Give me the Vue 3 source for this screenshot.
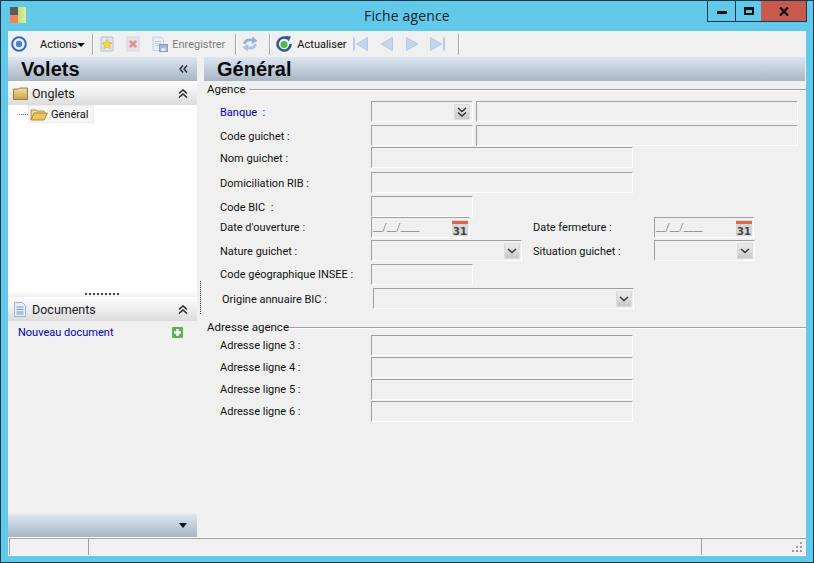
<script setup>
const addressRows = ['Adresse ligne 3 :', 'Adresse ligne 4 :', 'Adresse ligne 5 :', 'Adresse ligne 6 :']
</script>

<template>
  <div class="window">
    <header class="titlebar">
      <svg class="app-icon" width="16" height="16" viewBox="0 0 16 16">
        <defs>
          <linearGradient id="appGreen" x1="0" y1="0" x2="1" y2="0">
            <stop offset="0" stop-color="#b7e07e" />
            <stop offset="1" stop-color="#e2eda0" />
          </linearGradient>
          <linearGradient id="folderFill" x1="0" y1="0" x2="0" y2="1">
            <stop offset="0" stop-color="#f0dfa8" />
            <stop offset="1" stop-color="#cfa043" />
          </linearGradient>
        </defs>
        <rect x="0" y="0" width="8" height="8" fill="#5c5c5c" />
        <rect x="0" y="8" width="8" height="8" fill="#f0825a" />
        <rect x="8" y="0" width="8" height="16" fill="url(#appGreen)" />
      </svg>
      <span class="title">Fiche agence</span>
      <div class="caption">
        <button class="cap cap--min"><span class="min-bar"></span></button>
        <button class="cap cap--max"><span class="max-box"></span></button>
        <button class="cap cap--close">
          <svg width="10" height="9" viewBox="0 0 10 9">
            <path d="M1 0.5 L9 8.5 M9 0.5 L1 8.5" stroke="#111" stroke-width="2.4" fill="none" />
          </svg>
        </button>
      </div>
    </header>

    <div class="client">
      <div class="toolbar">
        <svg class="tb tb-home" width="16" height="16" viewBox="0 0 16 16">
          <circle cx="8" cy="8" r="6.8" fill="#eef3fb" stroke="#3a68bc" stroke-width="2" />
          <circle cx="8" cy="8" r="3.2" fill="#4a80d2" />
        </svg>
        <span class="tb-text tb-actions">Actions</span>
        <span class="caret"></span>
        <span class="sep sep-1"></span>

        <svg class="tb tb-new" width="14" height="16" viewBox="0 0 14 16">
          <path d="M1 1 H13 V15 H1 Z" fill="#dde5f2" stroke="#b4c0d8" />
          <path d="M7 3.5 L8.5 6.6 L12 7 L9.5 9.4 L10.2 12.8 L7 11.1 L3.8 12.8 L4.5 9.4 L2 7 L5.5 6.6 Z" fill="#f6d93f" stroke="#c9a21e" stroke-width="0.5" />
        </svg>
        <svg class="tb tb-del" width="14" height="16" viewBox="0 0 14 16">
          <path d="M1 1 H13 V15 H1 Z" fill="#e6e2e8" stroke="#d5d5e0" />
          <path d="M3.8 4.8 L10.2 11.2 M10.2 4.8 L3.8 11.2" stroke="#e08f8f" stroke-width="2.6" />
        </svg>
        <svg class="tb tb-save" width="16" height="16" viewBox="0 0 16 16">
          <path d="M1 1 H9 L11.5 3.5 V14.5 H1 Z" fill="#e9edf5" stroke="#c6d0e2" />
          <path d="M3 5.5 H9 M3 7.5 H9 M3 9.5 H7" stroke="#bfcbe0" />
          <rect x="7.5" y="8.5" width="8" height="7" fill="#a9b4d6" stroke="#8f9dc6" />
          <rect x="9.5" y="12" width="4" height="3" fill="#e6eaf4" />
        </svg>
        <span class="tb-text tb-text--off tb-save-label">Enregistrer</span>
        <span class="sep sep-2"></span>

        <svg class="tb tb-sync" width="16" height="16" viewBox="0 0 16 16">
          <path d="M1 7.5 C2 3.5 6.5 1.5 10 3 L10.5 0.5 L15.5 5 L9.5 8 L10 5.6 C7 4.6 4.5 5.6 3.5 8.5 Z" fill="#8fb0d8" />
          <path d="M1 7.5 C2 3.5 6.5 1.5 10 3 L10.5 0.5 L15.5 5 L9.5 8 L10 5.6 C7 4.6 4.5 5.6 3.5 8.5 Z" fill="#a8c4e6" transform="rotate(180 8 8)" />
        </svg>
        <span class="sep sep-3"></span>

        <svg class="tb tb-refresh" width="16" height="16" viewBox="0 0 16 16">
          <path d="M11.5 2.5 A6.5 6.5 0 1 0 14.6 8" fill="none" stroke="#31598f" stroke-width="2.6" />
          <path d="M9 0 L15 0.5 L12.5 5.5 Z" fill="#31598f" />
          <circle cx="8" cy="8.5" r="3.5" fill="#4fb848" />
        </svg>
        <span class="tb-text tb-refresh-label">Actualiser</span>

        <svg class="tb tb-first" width="15" height="14" viewBox="0 0 15 14">
          <path d="M1 0.5 V13.5" stroke="#b6cde8" stroke-width="2" />
          <path d="M14.5 0.5 V13.5 L3.5 7 Z" fill="#c2d6ee" stroke="#a9c3e2" stroke-width="0.8" />
        </svg>
        <svg class="tb tb-prev" width="13" height="14" viewBox="0 0 13 14">
          <path d="M12.5 0.5 V13.5 L1 7 Z" fill="#c2d6ee" stroke="#a9c3e2" stroke-width="0.8" />
        </svg>
        <svg class="tb tb-next" width="13" height="14" viewBox="0 0 13 14">
          <path d="M0.5 0.5 V13.5 L12 7 Z" fill="#c2d6ee" stroke="#a9c3e2" stroke-width="0.8" />
        </svg>
        <svg class="tb tb-last" width="15" height="14" viewBox="0 0 15 14">
          <path d="M0.5 0.5 V13.5 L11.5 7 Z" fill="#c2d6ee" stroke="#a9c3e2" stroke-width="0.8" />
          <path d="M14 0.5 V13.5" stroke="#b6cde8" stroke-width="2" />
        </svg>
        <span class="sep sep-4"></span>
      </div>

      <div class="workspace">
        <aside class="sidebar">
          <div class="band band--side">
            <h2 class="band-title band-title--side">Volets</h2>
            <svg class="chev" width="9" height="8" viewBox="0 0 9 8">
              <path d="M4 0.5 L1 4 L4 7.5 M8 0.5 L5 4 L8 7.5" fill="none" stroke="#222" stroke-width="1.3" />
            </svg>
          </div>

          <div class="pane-head">
            <svg width="15" height="13" viewBox="0 0 15 13">
              <path d="M0.5 2 H5.5 L6.5 1 H14.5 V12.5 H0.5 Z" fill="url(#folderFill)" stroke="#7f6a32" stroke-width="0.8" />
            </svg>
            <span class="pane-label">Onglets</span>
            <svg class="pane-chev" width="10" height="9" viewBox="0 0 10 9">
              <path d="M1 4.5 L5 1 L9 4.5 M1 8.5 L5 5 L9 8.5" fill="none" stroke="#222" stroke-width="1.4" />
            </svg>
          </div>

          <div class="tree">
            <div class="tree-row">
              <span class="tree-dots"></span>
              <div class="tree-item">
                <svg width="18" height="13" viewBox="0 0 18 13">
                  <path d="M1 12 V2 H6 L7 3 H14 V5" fill="#f2dc9c" stroke="#8f7a3a" stroke-width="0.8" />
                  <path d="M1 12 L4 5 H17.5 L14 12 Z" fill="#f4c357" stroke="#8f7a3a" stroke-width="0.8" />
                </svg>
                <span>Général</span>
              </div>
            </div>
          </div>

          <div class="grip"><span class="grip-dots"></span></div>

          <div class="pane-head">
            <svg width="15" height="15" viewBox="0 0 15 15">
              <path d="M1.5 0.5 H9.5 L12.5 3.5 V14.5 H1.5 Z" fill="#eaf0fb" stroke="#9db2dc" />
              <path d="M3.5 5 H10.5 M3.5 7.5 H10.5 M3.5 10 H10.5 M3.5 12 H10.5" stroke="#6f8fd0" />
            </svg>
            <span class="pane-label">Documents</span>
            <svg class="pane-chev" width="10" height="9" viewBox="0 0 10 9">
              <path d="M1 4.5 L5 1 L9 4.5 M1 8.5 L5 5 L9 8.5" fill="none" stroke="#222" stroke-width="1.4" />
            </svg>
          </div>

          <div class="docs">
            <a class="doc-link">Nouveau document</a>
            <svg class="doc-add" width="11" height="11" viewBox="0 0 11 11">
              <rect width="11" height="11" rx="1" fill="#5cb356" />
              <path d="M5.5 2 V9 M2 5.5 H9" stroke="#fff" stroke-width="2.4" />
            </svg>
          </div>

          <div class="band band--foot">
            <span class="foot-caret"></span>
          </div>
        </aside>

        <div class="splitter"><span class="splitter-dots"></span></div>

        <main class="content">
          <div class="band band--main">
            <h1 class="band-title band-title--main">Général</h1>
          </div>

          <section class="group group--agence">
            <div class="legend"><span>Agence</span><i></i></div>
            <div class="rows rows--agence">
              <div class="row">
                <label class="lbl lbl--link">Banque &nbsp;:</label>
                <div class="field w-102 combo combo--wide">
                  <span class="combo-btn">
                    <svg width="10" height="10" viewBox="0 0 10 10">
                      <path d="M1 1 L5 4.5 L9 1 M1 5.5 L5 9 L9 5.5" fill="none" stroke="#333" stroke-width="1.5" />
                    </svg>
                  </span>
                </div>
                <div class="field w-322 ml-3"></div>
              </div>
              <div class="row">
                <label class="lbl">Code guichet :</label>
                <div class="field w-102"></div>
                <div class="field w-322 ml-3"></div>
              </div>
              <div class="row">
                <label class="lbl">Nom guichet :</label>
                <div class="field w-262"></div>
              </div>
              <div class="row">
                <label class="lbl">Domiciliation RIB :</label>
                <div class="field w-262"></div>
              </div>
              <div class="row">
                <label class="lbl">Code BIC &nbsp;:</label>
                <div class="field w-102"></div>
              </div>
              <div class="row">
                <label class="lbl lbl--up">Date d'ouverture :</label>
                <div class="field w-99 date">
                  <span class="mask">__/__/____</span>
                  <svg class="cal" width="16" height="16" viewBox="0 0 16 16">
                    <rect width="16" height="16" fill="#d6d6d6" />
                    <rect y="1" width="16" height="3" fill="#d9694a" />
                    <text x="8" y="14.5" class="cal-num">31</text>
                  </svg>
                </div>
                <label class="lbl lbl--up lbl--right">Date fermeture :</label>
                <div class="field w-100 date">
                  <span class="mask">__/__/____</span>
                  <svg class="cal" width="16" height="16" viewBox="0 0 16 16">
                    <rect width="16" height="16" fill="#d6d6d6" />
                    <rect y="1" width="16" height="3" fill="#d9694a" />
                    <text x="8" y="14.5" class="cal-num">31</text>
                  </svg>
                </div>
              </div>
              <div class="row">
                <label class="lbl">Nature guichet :</label>
                <div class="field w-151 combo">
                  <span class="combo-btn">
                    <svg width="10" height="6" viewBox="0 0 10 6">
                      <path d="M1 1 L5 4.5 L9 1" fill="none" stroke="#333" stroke-width="1.5" />
                    </svg>
                  </span>
                </div>
                <label class="lbl lbl--right lbl--near">Situation guichet :</label>
                <div class="field w-101 combo">
                  <span class="combo-btn">
                    <svg width="10" height="6" viewBox="0 0 10 6">
                      <path d="M1 1 L5 4.5 L9 1" fill="none" stroke="#333" stroke-width="1.5" />
                    </svg>
                  </span>
                </div>
              </div>
              <div class="row">
                <label class="lbl lbl--up">Code géographique INSEE :</label>
                <div class="field w-102"></div>
              </div>
              <div class="row row--shift">
                <label class="lbl">Origine annuaire BIC :</label>
                <div class="field w-261 combo">
                  <span class="combo-btn">
                    <svg width="10" height="6" viewBox="0 0 10 6">
                      <path d="M1 1 L5 4.5 L9 1" fill="none" stroke="#333" stroke-width="1.5" />
                    </svg>
                  </span>
                </div>
              </div>
            </div>
          </section>

          <section class="group group--adresse">
            <div class="legend"><span>Adresse agence</span><i></i></div>
            <div class="rows rows--adresse">
              <div v-for="label in addressRows" :key="label" class="row">
                <label class="lbl lbl--up">{{ label }}</label>
                <div class="field w-262"></div>
              </div>
            </div>
          </section>
        </main>
      </div>

      <footer class="statusbar">
        <div class="cell cell--a"></div>
        <div class="cell cell--b"></div>
        <div class="cell cell--c">
          <svg class="size-grip" width="12" height="12" viewBox="0 0 12 12" fill="#9a9a9a">
            <rect x="9" y="0" width="2" height="2" />
            <rect x="9" y="4" width="2" height="2" />
            <rect x="5" y="4" width="2" height="2" />
            <rect x="9" y="8" width="2" height="2" />
            <rect x="5" y="8" width="2" height="2" />
            <rect x="1" y="8" width="2" height="2" />
          </svg>
        </div>
      </footer>
    </div>
  </div>
</template>

<style scoped>
.window {
  width: 814px;
  height: 563px;
  box-sizing: border-box;
  background: #62c9eb;
  border: 1px solid #17384a;
  display: flex;
  flex-direction: column;
  font-family: Roboto, "Liberation Sans", sans-serif;
  font-size: 11px;
  color: #111;
  overflow: hidden;
}

/* barre de titre */
.titlebar {
  height: 30px;
  flex: none;
  display: flex;
  align-items: flex-start;
  position: relative;
}

.app-icon {
  margin: 6px 0 0 9px;
}

.title {
  position: absolute;
  left: 363px;
  top: 5px;
  font-family: "Open Sans", sans-serif;
  font-size: 14px;
  letter-spacing: 0.15px;
  color: #12242e;
}

.caption {
  margin-left: auto;
  margin-right: 6px;
  margin-top: -1px;
  display: flex;
  height: 22px;
  border: 1px solid #17384a;
  box-sizing: border-box;
}

.cap {
  padding: 0;
  border: none;
  background: none;
  display: flex;
  align-items: center;
  justify-content: center;
}

.cap--min {
  width: 28px;
  border-right: 1px solid #17384a;
}

.cap--max {
  width: 25px;
}

.cap--close {
  width: 45px;
  background: #c75a4c;
}

.min-bar {
  width: 10px;
  height: 3px;
  margin-top: 3px;
  background: #111;
}

.max-box {
  width: 6px;
  height: 3px;
  border: 2px solid #111;
  border-top-width: 3px;
}

.client {
  flex: 1;
  margin: 0 7px 6px 7px;
  background: #f0f0f0;
  display: flex;
  flex-direction: column;
  min-height: 0;
}

/* barre d'outils */
.toolbar {
  height: 26px;
  flex: none;
  display: flex;
  align-items: center;
}

.tb {
  flex: none;
}

.tb-text {
  color: #111;
}

.tb-text--off {
  color: #7d7d7d;
}

.tb-home { margin-left: 3px; }
.tb-actions { margin-left: 13px; }
.caret {
  margin: 1px 0 0 0;
  border-left: 4px solid transparent;
  border-right: 4px solid transparent;
  border-top: 4px solid #111;
}
.sep {
  width: 1px;
  height: 21px;
  background: #a8a8a8;
  box-shadow: 1px 0 0 #fff;
}
.sep-1 { margin-left: 7px; }
.tb-new { margin-left: 7px; }
.tb-del { margin-left: 12px; }
.tb-save { margin-left: 12px; }
.tb-save-label { margin-left: 4px; }
.sep-2 { margin-left: 10px; }
.tb-sync { margin-left: 6px; }
.sep-3 { margin-left: 11px; }
.tb-refresh { margin-left: 6px; }
.tb-refresh-label { margin-left: 5px; }
.tb-first { margin-left: 6px; }
.tb-prev { margin-left: 12px; }
.tb-next { margin-left: 13px; }
.tb-last { margin-left: 11px; }
.sep-4 { margin-left: 13px; }

/* zone principale */
.workspace {
  flex: 1;
  display: flex;
  min-height: 0;
}

.sidebar {
  width: 189px;
  flex: none;
  display: flex;
  flex-direction: column;
}

.band {
  height: 24px;
  flex: none;
  display: flex;
  align-items: center;
  background: linear-gradient(#dce7f3, #a9b4c2);
}

.band-title {
  margin: 0;
  font-family: "Liberation Sans", Arial, sans-serif;
  font-weight: 700;
  font-size: 20px;
  line-height: 24px;
  color: #0a0a0a;
}

.band-title--side { margin-left: 13px; }
.band-title--main { margin-left: 13px; }

.chev {
  margin-left: auto;
  margin-right: 9px;
}

.pane-head {
  height: 24px;
  flex: none;
  display: flex;
  align-items: center;
  padding-left: 5px;
  background: linear-gradient(#ffffff, #dcdcdc);
}

.pane-label {
  margin-left: 4px;
  font-size: 12.5px;
  color: #1a1a1a;
}

.pane-chev {
  margin-left: auto;
  margin-right: 9px;
}

.tree {
  height: 185px;
  flex: none;
  background: #fff;
}

.tree-row {
  display: flex;
  align-items: center;
  height: 18px;
}

.tree-dots {
  width: 9px;
  margin-left: 11px;
  border-top: 1px dotted #777;
}

.tree-item {
  display: flex;
  align-items: center;
  gap: 3px;
  height: 18px;
  box-sizing: border-box;
  padding: 0 5px 0 1px;
  background: #f5f5f5;
  border: 1px solid #ececec;
}

.grip {
  height: 7px;
  flex: none;
  display: flex;
  justify-content: center;
  align-items: center;
  background: linear-gradient(#fff, #f0f0f0);
}

.grip-dots {
  width: 35px;
  height: 2px;
  background: repeating-linear-gradient(90deg, #444 0 2px, transparent 2px 4px);
}

.docs {
  flex: 1;
  display: flex;
  align-items: flex-start;
  padding: 5px 14px 0 10px;
}

.doc-link {
  color: #0000a8;
}

.doc-add {
  margin-left: auto;
  margin-top: 1px;
}

.band--foot {
  height: 23px;
  justify-content: flex-end;
}

.foot-caret {
  margin-right: 10px;
  border-left: 4px solid transparent;
  border-right: 4px solid transparent;
  border-top: 5px solid #111;
}

.splitter {
  width: 7px;
  flex: none;
  display: flex;
  align-items: center;
  padding-left: 3px;
  box-sizing: border-box;
}

.splitter-dots {
  width: 1px;
  height: 33px;
  background: repeating-linear-gradient(#333 0 1px, transparent 1px 2px);
}

.content {
  flex: 1;
  min-width: 0;
  display: flex;
  flex-direction: column;
}

.band--main {
  margin-right: 1px;
}

.legend {
  display: flex;
  align-items: center;
  height: 14px;
  padding-left: 3px;
  font-size: 11.5px;
}

.legend i {
  flex: 1;
  height: 1px;
  margin-left: 3px;
  background: #a0a0a0;
  box-shadow: 0 1px 0 #fff;
}

.group--adresse .legend i {
  margin-left: 0;
}

.group--agence { margin-top: 1px; }

.rows {
  display: grid;
  margin-top: 5px;
}

.rows--agence {
  grid-template-rows: 24px 22px 25px 24px 21px 23px 24px 24px 21px;
}

.group--adresse {
  margin-top: 11px;
}

.rows--adresse {
  margin-top: 1px;
  grid-template-rows: 22px 22px 22px 21px;
}

.row {
  display: flex;
  align-items: flex-start;
  padding-left: 16px;
}

.row--shift {
  padding-left: 18px;
}

.lbl {
  width: 151px;
  flex: none;
  height: 21px;
  box-sizing: border-box;
  padding-top: 1px;
  line-height: 21px;
  white-space: nowrap;
  color: #111;
}

.lbl--up {
  padding-top: 0;
}

.lbl--link {
  color: #0000a8;
}

.lbl--right {
  width: 121px;
  margin-left: 63px;
}

.lbl--near {
  margin-left: 11px;
}

.field {
  height: 21px;
  flex: none;
  box-sizing: border-box;
  border: 1px solid #fff;
  border-top-color: #a0a0a0;
  border-left-color: #a0a0a0;
  display: flex;
  align-items: center;
}

.w-99 { width: 99px; }
.w-100 { width: 100px; }
.w-101 { width: 101px; }
.w-102 { width: 102px; }
.w-151 { width: 151px; }
.w-261 { width: 261px; }
.w-262 { width: 262px; }
.w-322 { width: 322px; }
.ml-3 { margin-left: 3px; }

.combo {
  justify-content: flex-end;
  padding-right: 1px;
}

.combo--wide {
  padding-right: 2px;
}

.combo-btn {
  width: 16px;
  height: 16px;
  display: flex;
  align-items: center;
  justify-content: center;
  background: linear-gradient(#ececec, #c8c8c8);
  border: 1px solid #dcdcdc;
  box-sizing: border-box;
}

.date {
  justify-content: space-between;
  padding: 0 1px;
}

.mask {
  color: #8a8a8a;
  font-size: 10.5px;
}

.cal-num {
  font-family: "DejaVu Sans", sans-serif;
  font-size: 10px;
  font-weight: 700;
  fill: #444;
  text-anchor: middle;
}

/* barre d'état */
.statusbar {
  height: 19px;
  flex: none;
  display: flex;
  box-sizing: border-box;
  border-top: 1px solid #fff;
  border-bottom: 1px solid #fff;
}

.cell {
  box-sizing: border-box;
  border-top: 1px solid #a0a0a0;
  border-left: 1px solid #a0a0a0;
  position: relative;
}

.cell--a { width: 79px; margin-left: 1px; }
.cell--b { width: 613px; }
.cell--c { flex: 1; }

.size-grip {
  position: absolute;
  right: 3px;
  bottom: 1px;
}
</style>

<style>
html, body {
  margin: 0;
  background: #62c9eb;
  overflow: hidden;
}
</style>
